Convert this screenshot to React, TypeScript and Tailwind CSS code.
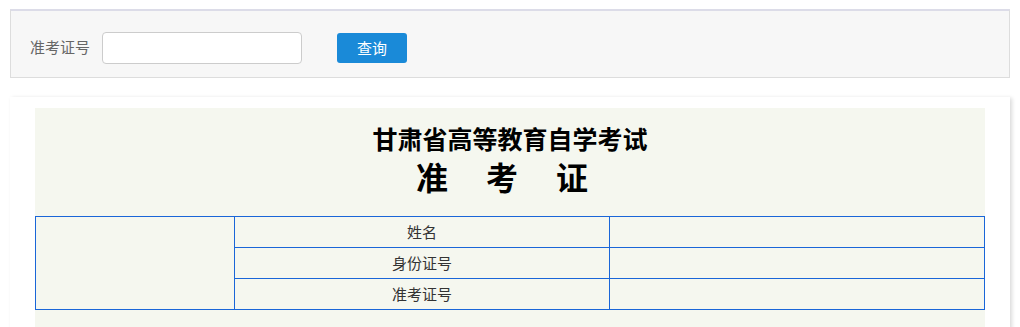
import React, { useState } from 'react';

const rows = ['姓名', '身份证号', '准考证号'];

export default function App() {
  const [ticketNo, setTicketNo] = useState('');

  return (
    <div className="min-h-screen bg-white pt-[9px] font-['Noto_Sans_CJK_SC','Microsoft_YaHei',sans-serif] text-[#333]">
      <div className="mx-[10px] flex h-[69px] items-start border border-t-2 border-[#dddddd] border-t-[#dcdce8] bg-[#f7f7f7] pl-[19px] pt-[21px]">
        <label className="mt-[4px] text-[15px] leading-[22px] text-[#666]">准考证号</label>
        <input
          value={ticketNo}
          onChange={(e) => setTicketNo(e.target.value)}
          className="ml-[12px] h-[32px] w-[200px] rounded-[4px] border border-[#cccccc] bg-white px-2 text-[14px] outline-none"
        />
        <button className="ml-[35px] mt-[1px] h-[30px] w-[70px] rounded-[3px] bg-[#1a8ad8] text-[15px] text-white">
          查询
        </button>
      </div>

      <div className="mx-[10px] mt-[19px] bg-white px-[25px] pt-[11px] shadow-[2px_1px_4px_rgba(0,0,0,0.15)]">
        <div className="bg-[#f5f7ef] pb-[20px] pt-[18px]">
          <h1 className="text-center text-[25px] font-bold leading-[24px] text-black">甘肃省高等教育自学考试</h1>
          <div className="mt-[6px] flex justify-center gap-[38px] pr-[16px] text-[32px] font-bold leading-[40px] text-black">
            <span>准</span>
            <span>考</span>
            <span>证</span>
          </div>

          <table className="mt-[20px] w-full border-collapse text-[15px]">
            <tbody>
              {rows.map((label, i) => (
                <tr key={label} className="h-[31px]">
                  {i === 0 && <td rowSpan={3} className="w-[199px] border border-[#1a66d8]" />}
                  <td className="w-[375px] border border-[#1a66d8] text-center text-[#333]">{label}</td>
                  <td className="border border-[#1a66d8]" />
                </tr>
              ))}
            </tbody>
          </table>
        </div>
      </div>
    </div>
  );
}
